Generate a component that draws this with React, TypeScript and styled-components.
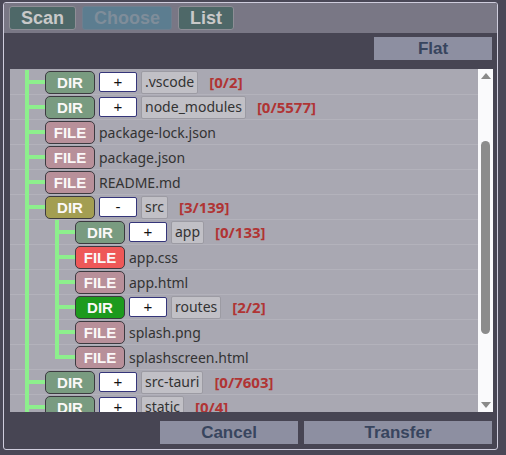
import styled, { createGlobalStyle } from 'styled-components'

const GlobalStyle = createGlobalStyle`
  html, body {
    margin: 0;
    padding: 0;
    background: #4a4857;
    font-family: 'Liberation Sans', Arial, sans-serif;
  }
`

const Window = styled.div`
  width: 493px;
  height: 446px;
  margin: 2px 0 0 3px;
  border: 1px solid #cfcddd;
  border-radius: 3px;
  display: flex;
  flex-direction: column;
  background: #474553;
  overflow: hidden;
`

const Toolbar = styled.div`
  height: 30px;
  box-sizing: border-box;
  padding: 3px 5px;
  display: flex;
  gap: 6px;
  background: #797785;
`

const TabButton = styled.button<{ $disabled?: boolean }>`
  height: 24px;
  padding: 0 11px;
  border: 1px solid ${p => (p.$disabled ? '#6d7f8f' : '#8e8e96')};
  border-radius: 3px;
  background: ${p => (p.$disabled ? '#5c7d90' : '#4e6868')};
  color: ${p => (p.$disabled ? '#7f8d9a' : '#c9c9c9')};
  font: bold 18px 'Liberation Sans', Arial, sans-serif;
  line-height: 22px;
`

const Body = styled.div`
  flex: 1;
  display: flex;
  flex-direction: column;
  padding: 4px 5px 4px 6px;
`

const BarRow = styled.div<{ $gap?: number }>`
  display: flex;
  justify-content: flex-end;
  gap: ${p => p.$gap ?? 0}px;
`

const PlainButton = styled.button<{ $width: number }>`
  width: ${p => p.$width}px;
  height: 23px;
  border: none;
  padding: 0;
  background: #8d8fa1;
  color: #38455e;
  font: bold 17px 'Liberation Sans', Arial, sans-serif;
  line-height: 23px;
`

const ListFrame = styled.div`
  margin-top: 9px;
  margin-right: -1px;
  height: 343px;
  display: flex;
  background: #a9a8b2;
`

const Tree = styled.div`
  flex: 1;
  overflow: hidden;
  padding: 1px 0 0 5px;
`

const Row = styled.div`
  height: 25px;
  box-sizing: border-box;
  display: flex;
  align-items: center;
  border-bottom: 1px solid #b3b2bb;
  margin-left: -5px;
  padding-left: 5px;
`

type Guide = 'pipe' | 'tee' | 'elbow'

const GuideCell = styled.div<{ $kind: Guide }>`
  width: 30px;
  align-self: stretch;
  margin-bottom: -1px;
  position: relative;
  flex-shrink: 0;

  &::before {
    content: '';
    position: absolute;
    left: 10px;
    top: 0;
    width: 4px;
    height: ${p => (p.$kind === 'elbow' ? '14px' : '100%')};
    background: #8def8d;
  }

  &::after {
    content: '';
    display: ${p => (p.$kind === 'pipe' ? 'none' : 'block')};
    position: absolute;
    left: 10px;
    right: 0;
    top: 10px;
    height: 4px;
    background: #8def8d;
  }
`

const Badge = styled.span<{ $bg: string }>`
  width: 48px;
  height: 21px;
  flex-shrink: 0;
  border: 1px solid #3c3a40;
  border-radius: 5px;
  background: ${p => p.$bg};
  color: #fbf8f8;
  font: bold 15px 'Liberation Sans', Arial, sans-serif;
  line-height: 21px;
  text-align: center;
`

const Toggle = styled.span`
  width: 36px;
  height: 18px;
  margin-left: 4px;
  border: 1px solid #35357a;
  border-radius: 2px;
  background: #ffffff;
  color: #111;
  font: 15px 'Liberation Sans', Arial, sans-serif;
  line-height: 18px;
  text-align: center;
`

const NameBox = styled.span`
  margin-left: 4px;
  height: 21px;
  padding: 0 3px;
  border: 1px solid #9c9ba3;
  border-radius: 2px;
  background: #c1c0c6;
  color: #333;
  font: 14px 'Noto Sans', sans-serif;
  line-height: 20px;
`

const FileName = styled.span`
  margin-left: 4px;
  color: #333;
  font: 14px 'Noto Sans', sans-serif;
`

const Count = styled.span`
  margin-left: 11px;
  color: #b03434;
  font: bold 15px 'Noto Sans', sans-serif;
`

const ScrollBar = styled.div`
  width: 15px;
  display: flex;
  flex-direction: column;
  align-items: center;
  background: #fafafc;
`

const Arrow = styled.div<{ $down?: boolean }>`
  height: 14px;
  display: flex;
  align-items: center;
  justify-content: center;

  &::before {
    content: '';
    border-left: 5px solid transparent;
    border-right: 5px solid transparent;
    ${p => (p.$down ? 'border-top: 6px solid #8a8a8a;' : 'border-bottom: 6px solid #8a8a8a;')}
  }
`

const Track = styled.div`
  flex: 1;
  padding-top: 58px;
`

const Thumb = styled.div`
  width: 9px;
  height: 193px;
  border-radius: 5px;
  background: #8c8c8c;
`

const Footer = styled(BarRow)`
  margin-top: 9px;
`

type Entry = {
  name: string
  guides: Guide[]
  dir?: boolean
  open?: boolean
  color?: string
  count?: string
}

const DIR = '#799b80'
const FILE = '#b8909a'

const entries: Entry[] = [
  { name: '.vscode', guides: ['tee'], dir: true, count: '[0/2]' },
  { name: 'node_modules', guides: ['tee'], dir: true, count: '[0/5577]' },
  { name: 'package-lock.json', guides: ['tee'] },
  { name: 'package.json', guides: ['tee'] },
  { name: 'README.md', guides: ['tee'] },
  { name: 'src', guides: ['tee'], dir: true, open: true, color: '#a39e52', count: '[3/139]' },
  { name: 'app', guides: ['pipe', 'tee'], dir: true, count: '[0/133]' },
  { name: 'app.css', guides: ['pipe', 'tee'], color: '#ee5858' },
  { name: 'app.html', guides: ['pipe', 'tee'] },
  { name: 'routes', guides: ['pipe', 'tee'], dir: true, color: '#1d9a1d', count: '[2/2]' },
  { name: 'splash.png', guides: ['pipe', 'tee'] },
  { name: 'splashscreen.html', guides: ['pipe', 'elbow'] },
  { name: 'src-tauri', guides: ['tee'], dir: true, count: '[0/7603]' },
  { name: 'static', guides: ['tee'], dir: true, count: '[0/4]' },
]

const TreeRow = ({ entry }: { entry: Entry }) => (
  <Row>
    {entry.guides.map((g, i) => (
      <GuideCell key={i} $kind={g} />
    ))}
    <Badge $bg={entry.color ?? (entry.dir ? DIR : FILE)}>{entry.dir ? 'DIR' : 'FILE'}</Badge>
    {entry.dir ? (
      <>
        <Toggle>{entry.open ? '-' : '+'}</Toggle>
        <NameBox>{entry.name}</NameBox>
        <Count>{entry.count}</Count>
      </>
    ) : (
      <FileName>{entry.name}</FileName>
    )}
  </Row>
)

const App = () => {
  return (
    <>
      <GlobalStyle />
      <Window>
        <Toolbar>
          <TabButton>Scan</TabButton>
          <TabButton $disabled>Choose</TabButton>
          <TabButton>List</TabButton>
        </Toolbar>
        <Body>
          <BarRow>
            <PlainButton $width={118}>Flat</PlainButton>
          </BarRow>
          <ListFrame>
            <Tree>
              {entries.map(e => (
                <TreeRow key={e.name} entry={e} />
              ))}
            </Tree>
            <ScrollBar>
              <Arrow />
              <Track>
                <Thumb />
              </Track>
              <Arrow $down />
            </ScrollBar>
          </ListFrame>
          <Footer $gap={6}>
            <PlainButton $width={138}>Cancel</PlainButton>
            <PlainButton $width={188}>Transfer</PlainButton>
          </Footer>
        </Body>
      </Window>
    </>
  )
}

export default App
